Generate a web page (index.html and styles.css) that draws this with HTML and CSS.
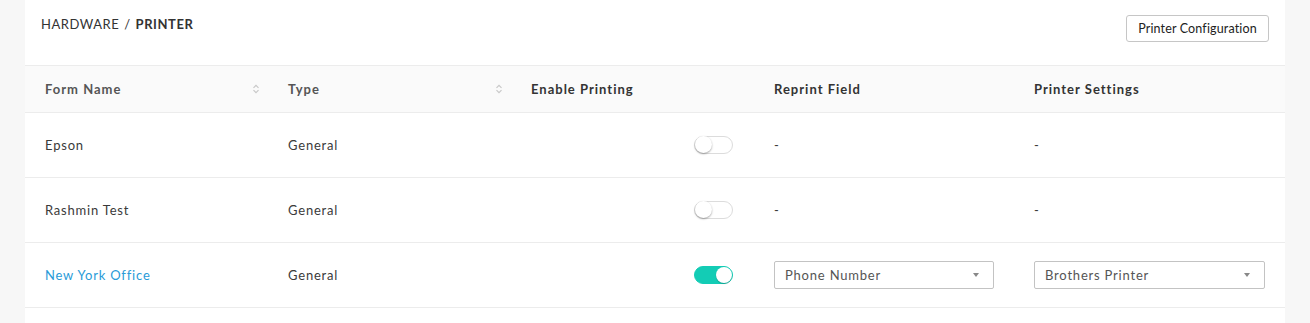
FILE: index.html
```html
<!DOCTYPE html>
<html>
<head>
<meta charset="utf-8">
<link rel="stylesheet" href="styles.css">
</head>
<body>
<div class="card">
  <div class="top">
    <div class="crumb">HARDWARE <span class="sep">/</span> <b>PRINTER</b></div>
    <button class="btn">Printer Configuration</button>
  </div>
  <div class="row head">
    <div class="cell sortable">Form Name <span class="sort"><svg width="8" height="10" viewBox="0 0 8 10"><path d="M1.5 3.8 L4 1.3 L6.5 3.8 M1.5 6.2 L4 8.7 L6.5 6.2" fill="none" stroke="#c8c8c8" stroke-width="1.2"/></svg></span></div>
    <div class="cell sortable">Type <span class="sort"><svg width="8" height="10" viewBox="0 0 8 10"><path d="M1.5 3.8 L4 1.3 L6.5 3.8 M1.5 6.2 L4 8.7 L6.5 6.2" fill="none" stroke="#c8c8c8" stroke-width="1.2"/></svg></span></div>
    <div class="cell dark">Enable Printing</div>
    <div class="cell dark">Reprint Field</div>
    <div class="cell dark">Printer Settings</div>
  </div>
  <div class="row">
    <div class="cell">Epson</div>
    <div class="cell">General</div>
    <div class="cell right"><span class="toggle"><span class="knob"></span></span></div>
    <div class="cell">-</div>
    <div class="cell">-</div>
  </div>
  <div class="row">
    <div class="cell">Rashmin Test</div>
    <div class="cell">General</div>
    <div class="cell right"><span class="toggle"><span class="knob"></span></span></div>
    <div class="cell">-</div>
    <div class="cell">-</div>
  </div>
  <div class="row">
    <div class="cell link">New York Office</div>
    <div class="cell">General</div>
    <div class="cell right"><span class="toggle on"><span class="knob"></span></span></div>
    <div class="cell"><div class="select">Phone Number<span class="caret"></span></div></div>
    <div class="cell"><div class="select">Brothers Printer<span class="caret"></span></div></div>
  </div>
</div>
</body>
</html>
```
FILE: styles.css
```css
html, body {
  margin: 0;
  padding: 0;
  background: #f7f7f7;
  font-family: Lato, "Liberation Sans", sans-serif;
  color: #333;
}
.card {
  margin: 0 25px;
  background: #fff;
  height: 323px;
}
.top {
  height: 66px;
  box-sizing: border-box;
  display: flex;
  justify-content: space-between;
  align-items: flex-start;
  padding: 15px 16px 0 16px;
  border-bottom: 1px solid #ececec;
}
.crumb {
  font-size: 13px;
  color: #333;
  letter-spacing: 0.55px;
  padding-top: 1px;
}
.crumb .sep { margin: 0 1px; }
.crumb b { font-weight: 700; color: #333; }
.btn {
  font-family: inherit;
  font-size: 12.5px;
  letter-spacing: 0.15px;
  color: #222;
  background: #fff;
  border: 1px solid #c6c6c6;
  border-radius: 3px;
  height: 27px;
  width: 143px;
  padding: 0;
}
.row {
  display: grid;
  grid-template-columns: 243px 243px 243px 260px 1fr;
  height: 65px;
  border-bottom: 1px solid #ececec;
  box-sizing: border-box;
  font-size: 13px;
  letter-spacing: 0.8px;
  color: #3a3a3a;
}
.row.head {
  height: 47px;
  background: #fafafa;
  font-weight: 700;
  font-size: 13px;
  letter-spacing: 1px;
  color: #555;
}
.cell {
  display: flex;
  align-items: center;
  padding: 0 20px;
  min-width: 0;
}
.head .dark { color: #333; }
.sortable {
  justify-content: space-between;
  padding-right: 4px;
}
.sort { display: flex; width: 16px; justify-content: center; }
.right { justify-content: flex-end; }
.link { color: #2a9bd8; }
.toggle {
  position: relative;
  width: 39px;
  height: 18px;
  border-radius: 9px;
  border: 1px solid #dcdcdc;
  box-sizing: border-box;
  background: #fff;
  margin-right: 1px;
}
.toggle .knob {
  position: absolute;
  top: -1px;
  left: 0;
  width: 17px;
  height: 17px;
  border-radius: 50%;
  background: #fff;
  box-shadow: 0 1px 2px rgba(0,0,0,0.35);
}
.toggle.on {
  background: #13ccb5;
  border-color: #13ccb5;
}
.toggle.on .knob {
  left: auto;
  right: 0;
  top: 0;
  width: 16px;
  height: 16px;
  box-shadow: 0 1px 1px rgba(0,0,0,0.2);
}
.select {
  flex: 1;
  height: 28px;
  box-sizing: border-box;
  border: 1px solid #c3c3c3;
  border-radius: 2px;
  display: flex;
  align-items: center;
  justify-content: space-between;
  padding: 0 14px 0 10px;
  color: #555;
  font-size: 13px;
}
.caret {
  width: 0;
  height: 0;
  border-left: 3.5px solid transparent;
  border-right: 3.5px solid transparent;
  border-top: 4px solid #888;
}
```
